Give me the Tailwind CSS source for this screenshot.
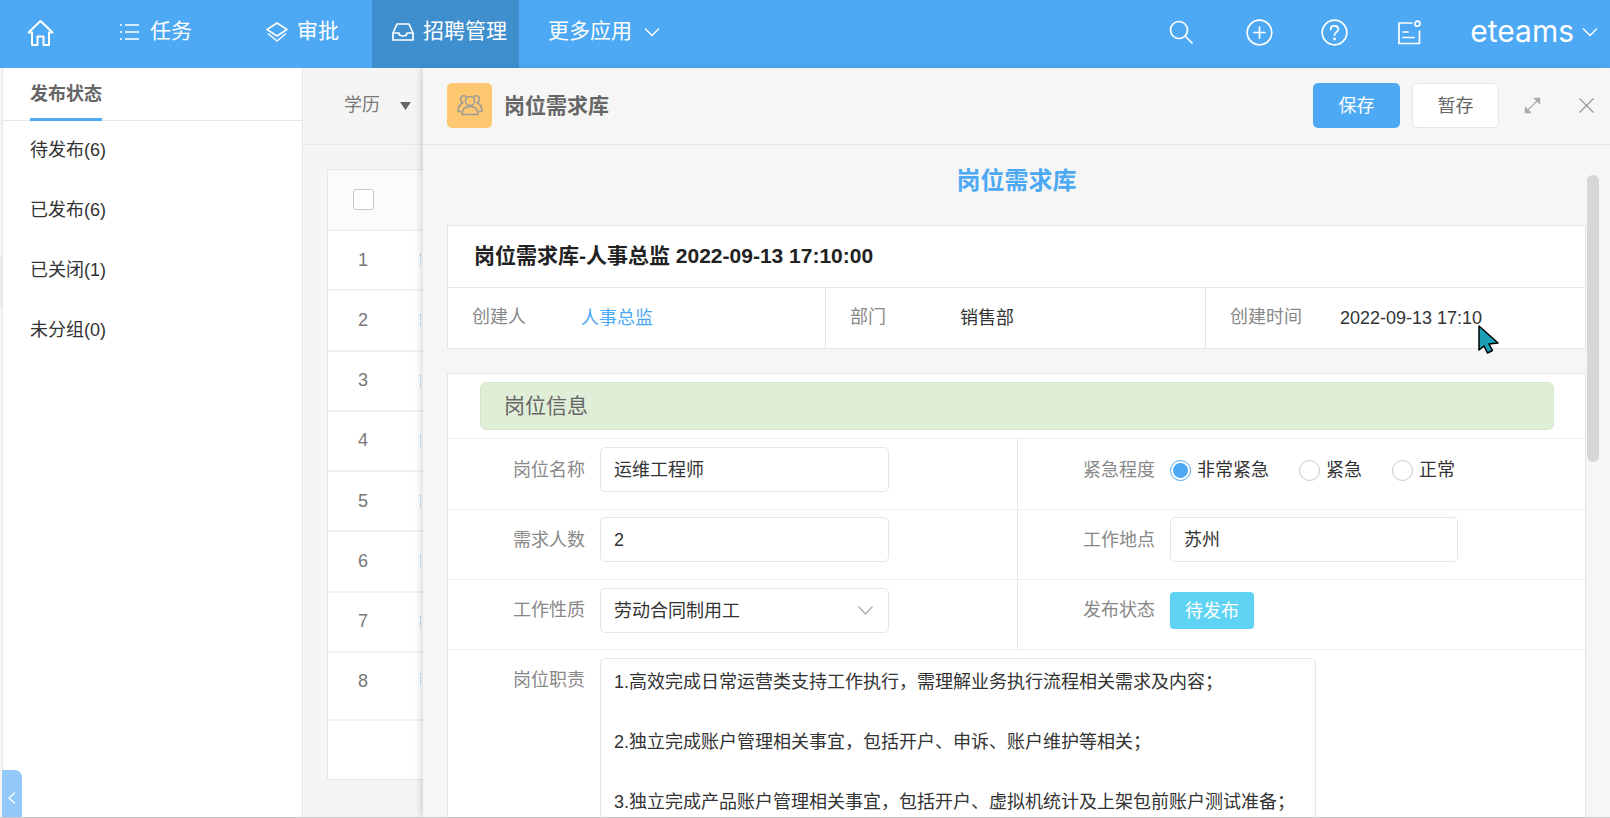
<!DOCTYPE html>
<html lang="zh">
<head>
<meta charset="utf-8">
<title>岗位需求库</title>
<script src="https://cdn.jsdelivr.net/npm/@tailwindcss/browser@4"></script>
</head>
<body class="m-0">
<div class="relative w-[1610px] h-[818px] overflow-hidden bg-[#f5f5f5] font-['Liberation_Sans','Noto_Sans_CJK_SC',sans-serif] text-[18px] text-[#333] flex flex-col border-b border-[#c8c8c8]">

  <!-- top nav -->
  <header class="h-[68px] shrink-0 bg-[#4da9f3] text-white text-[21px] flex items-center">
    <div class="w-[100px] h-full pl-[27px] pb-[2px] flex items-center">
      <svg class="w-[27px] h-[28px]" viewBox="0 0 27 28" fill="none" stroke="white" stroke-width="2" stroke-linejoin="round" stroke-linecap="round"><path d="M1.5 13.5 13.5 2l12 11.5h-3.5V26h-5.5v-8.5h-6V26H5V13.5z"/></svg>
    </div>
    <div class="w-[148px] h-full pl-[20px] pb-[5px] flex items-center gap-[11px]">
      <svg class="w-[19px] h-[18px]" viewBox="0 0 19 18" fill="none" stroke="white" stroke-width="1.4"><path d="M5 2h14M5 9h14M5 16h14M0 2h2M0 9h2M0 16h2"/></svg>
      <span class="-mt-[2px]">任务</span>
    </div>
    <div class="w-[124px] h-full pl-[17px] pb-[5px] flex items-center gap-[8px]">
      <svg class="w-[24px] h-[22px]" viewBox="0 0 24 22" fill="none" stroke="white" stroke-width="1.5" stroke-linejoin="round"><path d="M12 2 22 8.5 12 15 2 8.5z"/><path d="M3 12.5 12 20l9-7.5"/></svg>
      <span class="-mt-[2px]">审批</span>
    </div>
    <div class="w-[147px] h-full pl-[20px] pb-[5px] flex items-center gap-[9px] bg-[#3f8fce]">
      <svg class="w-[22px] h-[20px]" viewBox="0 0 22 20" fill="none" stroke="white" stroke-width="1.7" stroke-linejoin="round"><path d="M5 2h12l4 9v7H1v-7z"/><path d="M1 11h6c0 2 2 3 4 3s4-1 4-3h6"/></svg>
      <span class="-mt-[2px]">招聘管理</span>
    </div>
    <div class="pl-[29px] h-full pb-[5px] flex items-center gap-[12px]">
      <span class="-mt-[2px]">更多应用</span>
      <svg class="w-[16px] h-[10px]" viewBox="0 0 16 10" fill="none" stroke="white" stroke-width="1.4"><path d="M1 1.5 8 8.500l7-7"/></svg>
    </div>
    <div class="ml-auto h-full pb-[4px] flex items-center">
      <svg class="w-[24px] h-[24px] mr-[53px]" viewBox="0 0 24 24" fill="none" stroke="white" stroke-width="1.7" stroke-linecap="round"><circle cx="10" cy="10" r="8.5"/><path d="m16 16 7 7"/></svg>
      <svg class="w-[27px] h-[27px] mr-[48px]" viewBox="0 0 27 27" fill="none" stroke="white" stroke-width="1.7" stroke-linecap="round"><circle cx="13.5" cy="13.5" r="12.3"/><path d="M13.5 8v11M8 13.5h11"/></svg>
      <svg class="w-[27px] h-[27px] mr-[49px]" viewBox="0 0 27 27" fill="none" stroke="white" stroke-width="1.7" stroke-linecap="round"><circle cx="13.5" cy="13.5" r="12.3"/><path d="M9.7 10.5c0-2.2 1.7-3.6 3.8-3.6s3.8 1.4 3.8 3.4c0 2.8-3.8 2.8-3.8 5.8"/><circle cx="13.5" cy="20" r=".6" fill="white"/></svg>
      <svg class="w-[24px] h-[25px] mr-[49px]" viewBox="0 0 24 25" fill="none" stroke="white" stroke-width="1.7" stroke-linecap="round" stroke-linejoin="round"><path d="M15 3H2v20.5h20.500V11"/><circle cx="20.500" cy="3.700" r="2.500"/><path d="M6 12h5M6 17.500h11"/></svg>
      <span class="font-['Inter',sans-serif] text-[30px] font-normal leading-none -mt-[3px]">eteams</span>
      <svg class="w-[16px] h-[10px] ml-[8px] mr-[12px]" viewBox="0 0 16 10" fill="none" stroke="white" stroke-width="1.4"><path d="M1 1.500 8 8.500l7-7"/></svg>
    </div>
  </header>

  <div class="flex-1 flex min-h-0">
    <!-- left sidebar -->
    <aside class="relative w-[301px] shrink-0 ml-[2px] -mr-[2px] bg-white border-l border-r border-[#e6e6e6]">
      <div class="h-[53px] border-b border-[#e6e6e6] pl-[27px]">
        <div class="w-[72px] h-[53px] border-b-[3px] border-[#4da9f3] font-bold text-[#666] leading-[52px]">发布状态</div>
      </div>
      <ul class="pl-[27px] -mt-[1px] text-[#333]">
        <li class="h-[60px] leading-[60px]">待发布(6)</li>
        <li class="h-[60px] leading-[60px]">已发布(6)</li>
        <li class="h-[60px] leading-[60px]">已关闭(1)</li>
        <li class="h-[60px] leading-[60px]">未分组(0)</li>
      </ul>
      <div class="absolute -left-px bottom-0 w-[20px] h-[47px] bg-[#93c9f8] rounded-tr-[7px] flex items-center justify-center">
        <svg class="w-[8px] h-[12px] mt-[8px]" viewBox="0 0 8 12" fill="none" stroke="white" stroke-width="1.2"><path d="M7 .5 1 6l6 5.500"/></svg>
      </div>
    </aside>

    <!-- list behind the panel -->
    <main class="flex-1 min-w-0 flex flex-col">
      <div class="h-[77px] shrink-0 border-b border-[#e6e6e6] pl-[43px] flex items-center gap-[10px] text-[#777]">
        <span class="-mt-[2px]">学历</span>
        <svg class="w-[11px] h-[8px] ml-[10px]" viewBox="0 0 11 8" fill="#666"><path d="M0 0h11L5.500 8z"/></svg>
      </div>
      <div class="flex-1 mt-[24px] mx-[26px] mb-[37px] bg-white border border-[#e6e6e6] text-[#777] text-center">
        <div class="h-[61px] bg-[#fbfbfb] border-b-2 border-[#f1f1f1]">
          <div class="w-[70px] h-full pb-[1px] flex items-center justify-center">
            <span class="block w-[21px] h-[21px] bg-white border border-[#c8c8c8] rounded-[3px]"></span>
          </div>
        </div>
        <div class="h-[60.25px] border-b-2 border-[#f1f1f1] flex items-center"><span class="w-[70px]">1</span><span class="ml-[22px] w-px h-[12px] border-l border-dotted border-[#4da9f3]/60"></span></div>
        <div class="h-[60.25px] border-b-2 border-[#f1f1f1] flex items-center"><span class="w-[70px]">2</span><span class="ml-[22px] w-px h-[12px] border-l border-dotted border-[#4da9f3]/60"></span></div>
        <div class="h-[60.25px] border-b-2 border-[#f1f1f1] flex items-center"><span class="w-[70px]">3</span><span class="ml-[22px] w-px h-[12px] border-l border-dotted border-[#4da9f3]/60"></span></div>
        <div class="h-[60.25px] border-b-2 border-[#f1f1f1] flex items-center"><span class="w-[70px]">4</span><span class="ml-[22px] w-px h-[12px] border-l border-dotted border-[#4da9f3]/60"></span></div>
        <div class="h-[60.25px] border-b-2 border-[#f1f1f1] flex items-center"><span class="w-[70px]">5</span><span class="ml-[22px] w-px h-[12px] border-l border-dotted border-[#4da9f3]/60"></span></div>
        <div class="h-[60.25px] border-b-2 border-[#f1f1f1] flex items-center"><span class="w-[70px]">6</span><span class="ml-[22px] w-px h-[12px] border-l border-dotted border-[#4da9f3]/60"></span></div>
        <div class="h-[60.25px] border-b-2 border-[#f1f1f1] flex items-center"><span class="w-[70px]">7</span><span class="ml-[22px] w-px h-[12px] border-l border-dotted border-[#4da9f3]/60"></span></div>
        <div class="h-[68px] border-b-2 border-[#f1f1f1] flex items-start pt-[15px]"><span class="w-[70px]">8</span><span class="ml-[22px] mt-[5px] w-px h-[12px] border-l border-dotted border-[#4da9f3]/60"></span></div>
      </div>
    </main>
  </div>

  <!-- slide-over panel -->
  <section class="absolute left-[423px] top-[68px] right-0 bottom-0 bg-[#f6f6f6] shadow-[-3px_0_6px_rgba(0,0,0,0.12)] overflow-hidden">
    <div class="h-[77px] border-b border-[#e6e6e6] pl-[24px] pb-[2px] flex items-center">
      <div class="w-[45px] h-[45px] rounded-[5px] bg-[#fec871] flex items-center justify-center">
        <svg class="w-[26px] h-[22px]" viewBox="0 0 26 22" fill="none" stroke="#9a9a9a" stroke-width="1.500" stroke-linejoin="round"><circle cx="13" cy="7" r="4.500"/><path d="M5 20.500c0-5 3-8 8-8s8 3 8 8z"/><path d="M9.500 3.500C8.500 2 7 1.500 6 1.800 3.800 2.300 3 5 4 7c.5 1 1.200 1.500 2 1.700C3 10 1 13 1 17.500h3"/><path d="M16.500 3.500C17.500 2 19 1.500 20 1.800c2.200.5 3 3.200 2 5.200-.5 1-1.200 1.500-2 1.700 3 1.300 5 4.300 5 8.800h-3"/></svg>
      </div>
      <h1 class="ml-[12px] text-[21px] font-bold text-[#666] leading-none">岗位需求库</h1>
      <button class="ml-auto w-[87px] h-[45px] pt-[2px] rounded-[5px] bg-[#4da9f3] text-white">保存</button>
      <button class="ml-[12px] w-[87px] h-[45px] pt-[2px] rounded-[5px] bg-white border border-[#e6e6e6] text-[#666]">暂存</button>
      <svg class="ml-[25px] w-[17px] h-[17px]" viewBox="0 0 17 17" fill="none" stroke="#aaa" stroke-width="1.300"><path d="M2 15 15 2"/><path d="M10 1.500h5.500V7" fill="#aaa"/><path d="M1.500 10v5.500H7" fill="#aaa"/></svg>
      <svg class="ml-[38px] mr-[16px] w-[15px] h-[15px]" viewBox="0 0 15 15" fill="none" stroke="#999" stroke-width="1.300"><path d="m.5.500 14 14M14.500.500l-14 14"/></svg>
    </div>

    <div class="pl-[24px] pr-[24px]">
      <h2 class="pt-[20px] h-[80px] text-center text-[24px] leading-[32px] font-bold text-[#4da9f3]">岗位需求库</h2>

      <div class="bg-white border border-[#e6e6e6]">
        <div class="h-[62px] pl-[26px] pb-[2px] flex items-center border-b border-[#e6e6e6] text-[21px] font-bold text-[#222]">岗位需求库-人事总监 2022-09-13 17:10:00</div>
        <div class="h-[60px] flex items-center">
          <div class="w-[378px] h-full border-r border-[#e6e6e6] pl-[24px] flex items-center">
            <span class="w-[109px] text-[#888] -mt-[2px]">创建人</span><span class="text-[#4da9f3]">人事总监</span>
          </div>
          <div class="w-[380px] h-full border-r border-[#e6e6e6] pl-[24px] flex items-center">
            <span class="w-[110px] text-[#888] -mt-[2px]">部门</span><span>销售部</span>
          </div>
          <div class="flex-1 h-full pl-[24px] flex items-center">
            <span class="w-[110px] text-[#888] -mt-[2px]">创建时间</span><span>2022-09-13 17:10</span>
          </div>
        </div>
      </div>

      <div class="mt-[24px] h-[500px] bg-white border border-[#e6e6e6]">
        <div class="mt-[8px] ml-[32px] mr-[31px] h-[48px] rounded-[6px] bg-[#e0eed8] border border-[#d6e7cc] pl-[23px] flex items-center text-[21px] text-[#666]">岗位信息</div>
        <div class="mt-[8px] h-[71px] flex border-t border-[#eee]">
          <div class="w-[570px] border-r border-[#e6e6e6] flex items-center pt-[8px] pb-[17px]">
            <span class="w-[137px] pt-[2px] text-right text-[#888]">岗位名称</span>
            <div class="ml-[15px] w-[289px] h-[45px] border border-[#e6e6e6] rounded-[5px] pl-[13px] leading-[45px]">运维工程师</div>
          </div>
          <div class="flex-1 flex items-center pt-[8px] pb-[17px]">
            <span class="w-[137px] pt-[2px] text-right text-[#888]">紧急程度</span>
            <span class="ml-[15px] mt-[2px] w-[21px] h-[21px] rounded-full border border-[#4da9f3] flex items-center justify-center"><span class="block w-[15px] h-[15px] rounded-full bg-[#4da9f3]"></span></span>
            <span class="ml-[6px] pt-[2px]">非常紧急</span>
            <span class="ml-[30px] mt-[2px] w-[21px] h-[21px] rounded-full border border-[#c8c8c8]"></span>
            <span class="ml-[6px] pt-[2px]">紧急</span>
            <span class="ml-[30px] mt-[2px] w-[21px] h-[21px] rounded-full border border-[#c8c8c8]"></span>
            <span class="ml-[6px] pt-[2px]">正常</span>
          </div>
        </div>
        <div class="h-[70px] flex border-t border-[#eee]">
          <div class="w-[570px] border-r border-[#e6e6e6] flex items-center pt-[7px] pb-[17px]">
            <span class="w-[137px] pt-[2px] text-right text-[#888]">需求人数</span>
            <div class="ml-[15px] w-[289px] h-[45px] border border-[#e6e6e6] rounded-[5px] pl-[13px] leading-[45px]">2</div>
          </div>
          <div class="flex-1 flex items-center pt-[7px] pb-[17px]">
            <span class="w-[137px] pt-[2px] text-right text-[#888]">工作地点</span>
            <div class="ml-[15px] w-[288px] h-[45px] border border-[#e6e6e6] rounded-[5px] pl-[13px] leading-[45px]">苏州</div>
          </div>
        </div>
        <div class="h-[70px] flex border-t border-[#eee]">
          <div class="w-[570px] border-r border-[#e6e6e6] flex items-center pt-[8px] pb-[16px]">
            <span class="w-[137px] text-right text-[#888]">工作性质</span>
            <div class="ml-[15px] w-[289px] h-[45px] border border-[#e6e6e6] rounded-[5px] pl-[13px] pr-[15px] flex items-center justify-between">
              <span class="pt-[2px]">劳动合同制用工</span>
              <svg class="w-[15px] h-[9px]" viewBox="0 0 15 9" fill="none" stroke="#aaa" stroke-width="1.200"><path d="M.5.500l7 7.500 7-7.500"/></svg>
            </div>
          </div>
          <div class="flex-1 flex items-center pt-[8px] pb-[16px]">
            <span class="w-[137px] text-right text-[#888]">发布状态</span>
            <span class="ml-[15px] w-[84px] h-[37px] rounded-[4px] bg-[#5fd3f3] text-white text-center leading-[38px]">待发布</span>
          </div>
        </div>
        <div class="flex border-t border-[#eee] pt-[8px]">
          <span class="w-[137px] text-right text-[#888] pt-[7px] leading-[30px]">岗位职责</span>
          <div class="ml-[15px] w-[716px] h-[200px] border border-[#e6e6e6] rounded-t-[5px] pl-[13px] pt-[8px] leading-[30px] space-y-[30px]">
            <p>1.高效完成日常运营类支持工作执行&#xFF0C;需理解业务执行流程相关需求及内容&#xFF1B;</p>
            <p>2.独立完成账户管理相关事宜&#xFF0C;包括开户、申诉、账户维护等相关&#xFF1B;</p>
            <p>3.独立完成产品账户管理相关事宜&#xFF0C;包括开户、虚拟机统计及上架包前账户测试准备&#xFF1B;</p>
          </div>
        </div>
      </div>
    </div>

    <div class="absolute left-[1164px] top-[107px] w-[12px] h-[287px] rounded-full bg-[#d6d7d9]"></div>
  </section>

  <!-- left edge marker -->
  <div class="absolute left-0 top-[256px] w-[2px] h-[52px] bg-[#ececec]"></div>

  <!-- mouse pointer captured in the screenshot -->
  <svg class="absolute left-[1478px] top-[325px] w-[21px] h-[29px]" viewBox="0 0 21 29" fill="#1a9fb5" stroke="#000" stroke-width="1.500" stroke-linejoin="round"><path d="M1 1v24l5-4 3.500 7 5-2.500-3.500-6.500 9-1z"/></svg>
</div>
</body>
</html>
